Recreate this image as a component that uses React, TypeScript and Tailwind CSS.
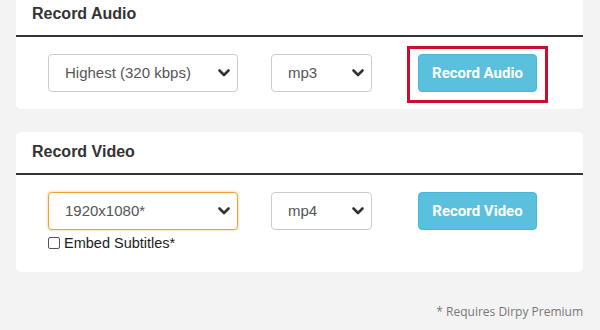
import React from 'react';

function Chevron() {
  return (
    <svg className="w-[14px] h-[14px] text-[#333]" viewBox="0 0 14 14" fill="none">
      <path d="M2.5 4.5 L7 9 L11.5 4.5" stroke="currentColor" strokeWidth={2.6} strokeLinecap="round" strokeLinejoin="round" />
    </svg>
  );
}

function FakeSelect({ value, width, focused }: { value: string; width: string; focused?: boolean }) {
  return (
    <div
      className={`${width} h-[38px] shrink-0 rounded-[4px] bg-white flex items-center justify-between pl-[16px] pr-[6px] text-[15px] text-[#555] ${
        focused ? 'border border-[#f0a030] shadow-[0_0_3px_rgba(240,160,48,0.6)]' : 'border border-[#cccccc]'
      }`}
    >
      <span>{value}</span>
      <Chevron />
    </div>
  );
}

function RecordButton({ label }: { label: string }) {
  return (
    <button className="w-[119px] h-[38px] rounded-[4px] bg-[#5bc0de] border border-[#46b8da] text-white text-[15px] font-bold font-['Roboto',sans-serif]">
      {label}
    </button>
  );
}

export default function App() {
  return (
    <div className="min-h-[330px] w-[600px] bg-[#f3f3f3] px-[16px] pr-[17px] font-['Liberation_Sans',Arial,sans-serif] overflow-hidden">
      {/* Record Audio */}
      <div className="-mt-[6px] bg-white rounded-[5px]">
        <div className="h-[43px] pt-[11px] pl-[16px] border-b-2 border-[#333] text-[16px] leading-[18px] font-semibold text-[#333]">
          Record Audio
        </div>
        <div className="flex items-start pl-[32px] pt-[17px] pb-[17px]">
          <FakeSelect value="Highest (320 kbps)" width="w-[190px]" />
          <div className="ml-[33px]">
            <FakeSelect value="mp3" width="w-[101px]" />
          </div>
          <div className="ml-[35px] -mt-[8px] -mb-[11px] border-[3px] border-[#c8102e] px-[8px] pt-[5px] pb-[8px]">
            <RecordButton label="Record Audio" />
          </div>
        </div>
      </div>

      {/* Record Video */}
      <div className="mt-[23px] bg-white rounded-[5px]">
        <div className="h-[43px] pt-[11px] pl-[16px] border-b-2 border-[#333] text-[16px] leading-[18px] font-semibold text-[#333]">
          Record Video
        </div>
        <div className="pl-[32px] pt-[17px] pb-[21px]">
          <div className="flex items-center">
            <FakeSelect value="1920x1080*" width="w-[190px]" focused />
            <div className="ml-[33px]">
              <FakeSelect value="mp4" width="w-[101px]" />
            </div>
            <div className="ml-[46px]">
              <RecordButton label="Record Video" />
            </div>
          </div>
          <label className="flex items-center mt-[5px] text-[14.5px] text-[#222] leading-[16px]">
            <span className="w-[12px] h-[12px] border border-[#555] rounded-[2px] bg-white mr-[4px]" />
            Embed Subtitles*
          </label>
        </div>
      </div>

      <div className="mt-[31px] text-right text-[12px] text-[#777] font-['Open_Sans',sans-serif]">
        * Requires Dirpy Premium
      </div>
    </div>
  );
}
